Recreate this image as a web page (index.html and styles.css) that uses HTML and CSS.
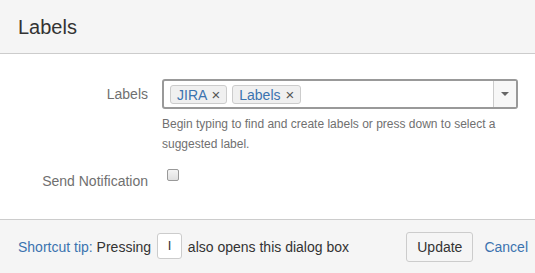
FILE: index.html
```html
<!DOCTYPE html>
<html lang="en">
<head>
  <meta charset="UTF-8">
  <title>Labels</title>
  <link rel="stylesheet" href="styles.css">
</head>
<body>
  <div class="dialog">
    <header class="dialog-header">
      <h2>Labels</h2>
    </header>
    <div class="dialog-body">
      <div class="field-row">
        <label class="field-label">Labels</label>
        <div class="field-value">
          <div class="multi-select">
            <div class="tags">
              <span class="tag">JIRA <span class="tag-x">&#215;</span></span>
              <span class="tag">Labels <span class="tag-x">&#215;</span></span>
            </div>
            <div class="drop">
              <span class="arrow"></span>
            </div>
          </div>
          <p class="description">Begin typing to find and create labels or press down to select a suggested label.</p>
        </div>
      </div>
      <div class="field-row notify-row">
        <label class="field-label">Send Notification</label>
        <div class="field-value">
          <span class="checkbox"></span>
        </div>
      </div>
    </div>
    <footer class="dialog-footer">
      <p class="tip">
        <span class="tip-title">Shortcut tip:</span> Pressing <span class="key">I</span> also opens this dialog box
      </p>
      <div class="actions">
        <button class="button">Update</button>
        <a class="cancel" href="#">Cancel</a>
      </div>
    </footer>
  </div>
</body>
</html>
```

FILE: styles.css
```css
* {
  margin: 0;
  padding: 0;
  box-sizing: border-box;
}
body {
  font-family: "Liberation Sans", Arial, sans-serif;
  font-size: 14px;
  color: #333;
  background: #fff;
}
.dialog {
  width: 535px;
  height: 273px;
  display: flex;
  flex-direction: column;
}
.dialog-header {
  height: 54px;
  background: #f5f5f5;
  border-bottom: 1px solid #ccc;
  padding: 0 18px;
  display: flex;
  align-items: center;
}
.dialog-header h2 {
  font-size: 20px;
  font-weight: normal;
  color: #333;
  margin-top: 2px;
}
.dialog-body {
  flex: 1;
  padding-top: 25px;
}
.field-row {
  display: flex;
}
.field-label {
  width: 148px;
  text-align: right;
  color: #707070;
  line-height: 20px;
  padding-top: 5px;
}
.field-value {
  margin-left: 14px;
  width: 356px;
}
.multi-select {
  height: 30px;
  border: 2px solid #999;
  border-radius: 3px;
  display: flex;
  background: #fff;
}
.tags {
  flex: 1;
  display: flex;
  align-items: center;
  gap: 5px;
  padding-left: 6px;
}
.tag {
  height: 19px;
  line-height: 17px;
  padding: 0 6px;
  background: #f0f0f0;
  border: 1px solid #ccc;
  border-radius: 3px;
  color: #3b73af;
  font-size: 14px;
}
.tag-x {
  color: #555;
  font-size: 15px;
  margin-left: 1px;
}
.drop {
  width: 23px;
  border-left: 1px solid #ccc;
  background: #f7f7f7;
  display: flex;
  align-items: center;
  justify-content: center;
}
.arrow {
  width: 0;
  height: 0;
  border-left: 4px solid transparent;
  border-right: 4px solid transparent;
  border-top: 4px solid #666;
}
.description {
  font-size: 12px;
  color: #707070;
  line-height: 20px;
  margin-top: 5px;
}
.notify-row {
  margin-top: 12px;
}
.notify-row .field-label {
  padding-top: 5px;
}
.checkbox {
  display: block;
  width: 12px;
  height: 12px;
  margin-left: 5px;
  margin-top: 3px;
  border: 1px solid #999;
  border-radius: 2px;
  background: linear-gradient(#f4f4f4, #e0e0e0);
}
.dialog-footer {
  height: 54px;
  background: #f5f5f5;
  border-top: 1px solid #ccc;
  padding: 0 7px 0 18px;
  display: flex;
  align-items: center;
  justify-content: space-between;
}
.tip {
  line-height: 20px;
  padding-top: 3px;
}
.tip-title {
  color: #3b73af;
}
.key {
  display: inline-block;
  vertical-align: middle;
  width: 25px;
  height: 26px;
  line-height: 24px;
  text-align: center;
  border: 1px solid #ccc;
  border-radius: 3px;
  background: #fff;
  font-size: 13px;
  margin: -4px 2px 0;
}
.actions {
  display: flex;
  align-items: center;
}
.button {
  font-family: inherit;
  font-size: 14px;
  color: #333;
  height: 30px;
  padding: 0 10px;
  background: #f5f5f5;
  border: 1px solid #ccc;
  border-radius: 3px;
}
.cancel {
  color: #3b73af;
  text-decoration: none;
  margin-left: 11px;
}
```
